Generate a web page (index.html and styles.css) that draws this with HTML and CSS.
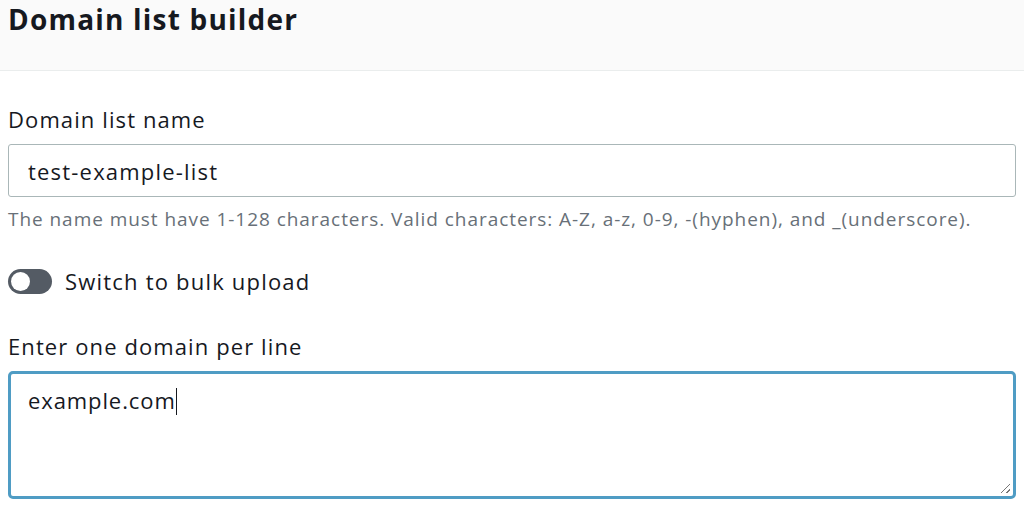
FILE: index.html
```html
<!DOCTYPE html>
<html lang="en">
<head>
    <meta charset="UTF-8">
    <meta name="viewport" content="width=device-width, initial-scale=1.0">
    <title>Domain list builder</title>
    <link rel="stylesheet" href="styles.css">
</head>
<body>
    <div class="header">
        <h1>Domain list builder</h1>
    </div>

    <div class="content">
        <div class="field">
            <label class="label" for="listName">Domain list name</label>
            <input class="input" id="listName" type="text" value="test-example-list">
            <div class="hint">The name must have 1-128 characters. Valid characters: A-Z, a-z, 0-9, -(hyphen), and _(underscore).</div>
        </div>

        <div class="toggle-row">
            <span class="toggle"><span class="knob"></span></span>
            <span class="toggle-label">Switch to bulk upload</span>
        </div>

        <div class="field field-domains">
            <label class="label">Enter one domain per line</label>
            <div class="textarea">example.com<span class="caret"></span></div>
        </div>
    </div>
</body>
</html>
```

FILE: styles.css
```css
body {
    margin: 0;
    font-family: "Open Sans", "Noto Sans", sans-serif;
    color: #16191f;
    background: #ffffff;
}
.header {
    height: 70px;
    background: #fafafa;
    border-bottom: 1px solid #eaeded;
    padding: 0 8px;
}
.header h1 {
    margin: 0;
    font-size: 28px;
    line-height: 38px;
    font-weight: 700;
    letter-spacing: 1.2px;
}
.content {
    padding: 0 8px;
}
.field {
    margin-top: 33px;
}
.field-domains {
    margin-top: 35px;
}
.label {
    display: block;
    font-size: 22px;
    line-height: 30px;
    letter-spacing: 1.1px;
    margin-bottom: 10px;
}
.input {
    display: block;
    box-sizing: border-box;
    width: 100%;
    height: 53px;
    border: 1px solid #aab7b8;
    border-radius: 3px;
    padding: 0 19px;
    font-family: inherit;
    font-size: 22px;
    letter-spacing: 1.2px;
    color: #16191f;
}
.hint {
    margin-top: 9px;
    font-size: 19px;
    line-height: 26px;
    letter-spacing: 0.95px;
    color: #687078;
}
.toggle-row {
    display: flex;
    align-items: center;
    gap: 13px;
    margin-top: 34px;
}
.toggle {
    position: relative;
    width: 44px;
    height: 25px;
    border-radius: 13px;
    background: #545b64;
}
.knob {
    position: absolute;
    left: 3px;
    top: 3px;
    width: 19px;
    height: 19px;
    border-radius: 50%;
    background: #ffffff;
}
.toggle-label {
    font-size: 22px;
    line-height: 30px;
    letter-spacing: 1.2px;
}
.textarea {
    box-sizing: border-box;
    height: 128px;
    border: 3px solid #4f9cc4;
    border-radius: 5px;
    padding: 11px 17px;
    font-size: 22px;
    line-height: 30px;
    letter-spacing: 0.9px;
    position: relative;
}
.caret {
    display: inline-block;
    width: 1px;
    height: 27px;
    background: #16191f;
    vertical-align: -6px;
}
.textarea::after {
    content: "";
    position: absolute;
    right: 3px;
    bottom: 3px;
    width: 9px;
    height: 9px;
    background: linear-gradient(135deg, transparent 45%, #777 45%, #777 55%, transparent 55%, transparent 75%, #777 75%, #777 85%, transparent 85%);
}
```
